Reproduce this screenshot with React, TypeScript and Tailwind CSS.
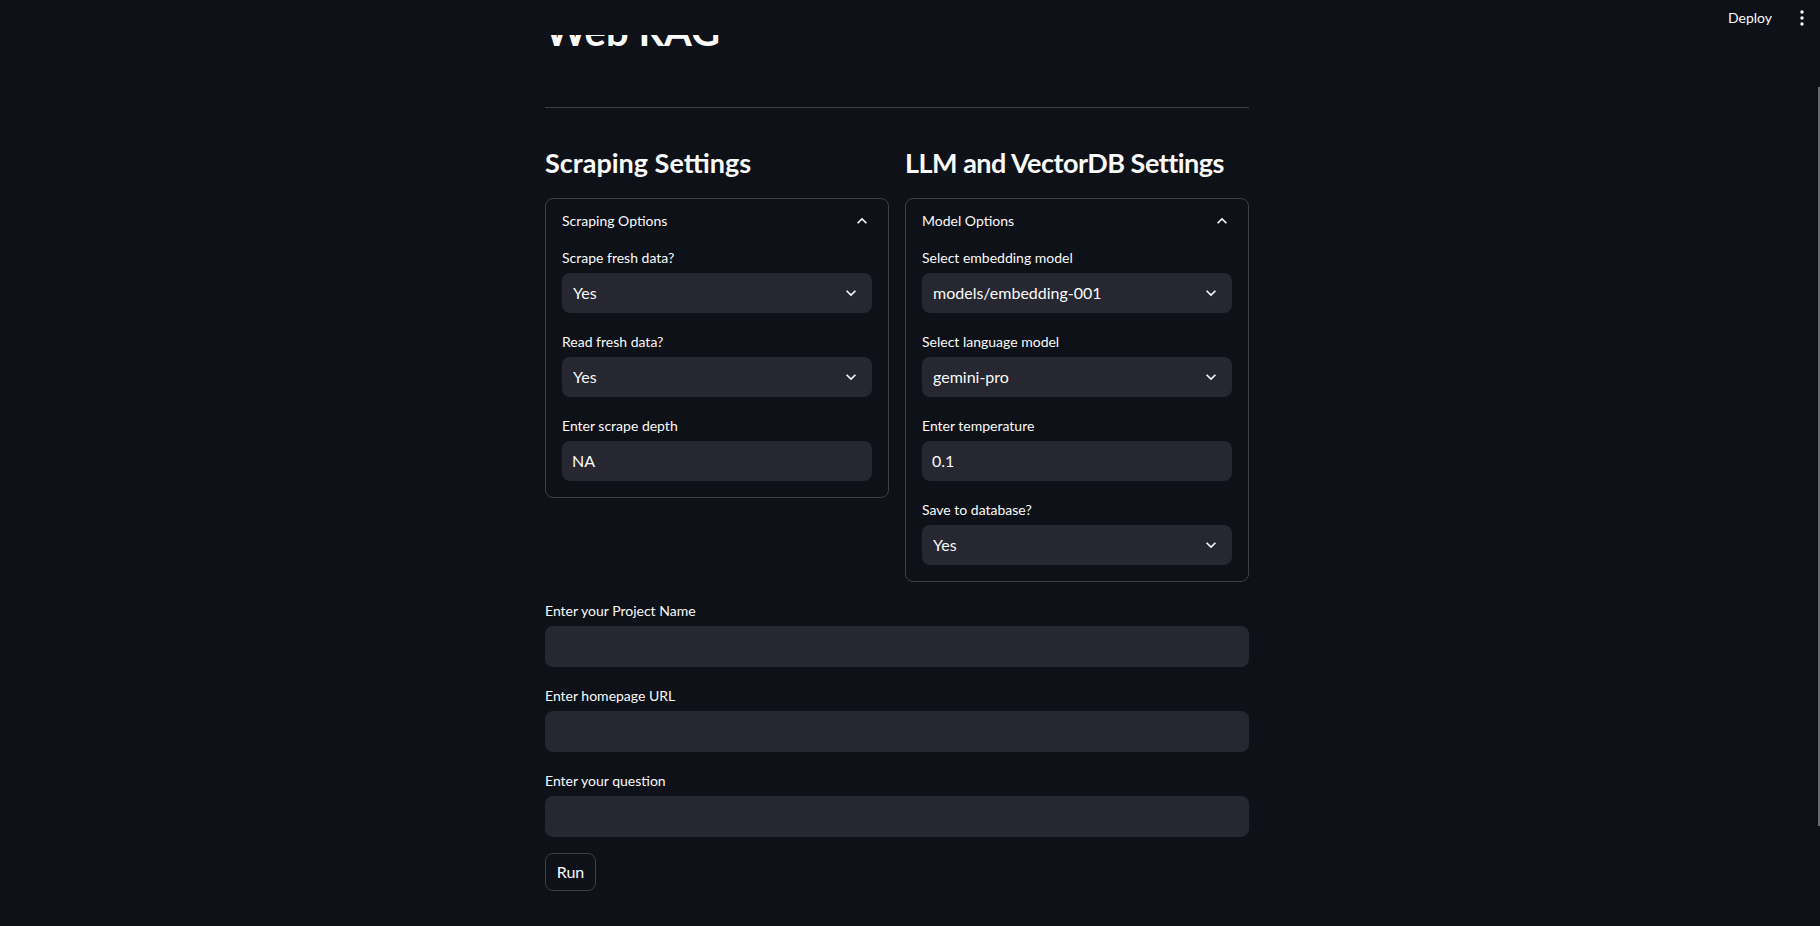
import React from 'react';

const font = { fontFamily: 'Lato, "Noto Sans", sans-serif' };

function ChevronDown() {
  return (
    <svg width="20" height="20" viewBox="0 0 24 24" fill="#fafafa">
      <path d="M16.59 8.59L12 13.17 7.41 8.59 6 10l6 6 6-6z" />
    </svg>
  );
}

function ChevronUp() {
  return (
    <svg width="20" height="20" viewBox="0 0 24 24" fill="#fafafa">
      <path d="M12 8l-6 6 1.41 1.41L12 10.83l4.59 4.58L18 14z" />
    </svg>
  );
}

function Label({ text }: { text: string }) {
  return <div className="h-[28px] text-[14px] leading-[25px] text-[#fafafa]">{text}</div>;
}

function SelectBox({ label, value }: { label: string; value: string }) {
  return (
    <div>
      <Label text={label} />
      <div className="h-[40px] rounded-lg bg-[#262730] flex items-center justify-between pl-[11px] pr-[11px]">
        <span className="text-[16px] text-[#fafafa]">{value}</span>
        <ChevronDown />
      </div>
    </div>
  );
}

function TextBox({ label, value, tall }: { label: string; value?: string; tall?: boolean }) {
  return (
    <div>
      <Label text={label} />
      <div className={`${tall ? 'h-[41px]' : 'h-[40px]'} rounded-lg bg-[#262730] flex items-center pl-[10px]`}>
        <span className="text-[16px] text-[#fafafa]">{value}</span>
      </div>
    </div>
  );
}

function Expander({ title, children }: { title: string; children: React.ReactNode }) {
  return (
    <div className="border border-[#3d4044] rounded-lg">
      <div className="h-[46px] flex items-center justify-between px-4 pb-[3px]">
        <span className="text-[14px] text-[#fafafa]">{title}</span>
        <ChevronUp />
      </div>
      <div className="px-4 pb-4 flex flex-col gap-4">{children}</div>
    </div>
  );
}

export default function App() {
  return (
    <div className="relative h-[926px] w-full overflow-hidden bg-[#0e1117] text-[#fafafa]" style={font}>
      {/* top bar */}
      <div className="absolute top-0 left-0 right-0 h-[35px] bg-[#0e1117] z-10 flex items-center justify-end">
        <span className="text-[14px] text-[#fafafa] mr-[18px]">Deploy</span>
        <svg width="24" height="24" viewBox="0 0 24 24" fill="#fafafa" className="mr-[6px]">
          <circle cx="12" cy="6" r="1.7" />
          <circle cx="12" cy="12" r="1.7" />
          <circle cx="12" cy="18" r="1.7" />
        </svg>
      </div>
      <div className="absolute right-0 top-[87px] h-[739px] w-[2px] bg-[#6a6b70]" />

      <div className="ml-[545px] w-[704px] pt-[7px]">
        <h1 className="text-[40px] leading-[48px] font-bold">Web RAG</h1>
        <div className="mt-[52px] h-px bg-[#3d4044]" />

        <div className="mt-[37px] grid grid-cols-2 gap-4 items-start">
          <div>
            <h3 className="text-[27px] leading-[36px] font-bold mb-[17px]">Scraping Settings</h3>
            <Expander title="Scraping Options">
              <SelectBox label="Scrape fresh data?" value="Yes" />
              <SelectBox label="Read fresh data?" value="Yes" />
              <TextBox label="Enter scrape depth" value="NA" />
            </Expander>
          </div>
          <div>
            <h3 className="text-[27px] leading-[36px] font-bold mb-[17px] tracking-[-0.5px]">LLM and VectorDB Settings</h3>
            <Expander title="Model Options">
              <SelectBox label="Select embedding model" value="models/embedding-001" />
              <SelectBox label="Select language model" value="gemini-pro" />
              <TextBox label="Enter temperature" value="0.1" />
              <SelectBox label="Save to database?" value="Yes" />
            </Expander>
          </div>
        </div>

        <div className="mt-4 flex flex-col gap-4">
          <TextBox label="Enter your Project Name" tall />
          <TextBox label="Enter homepage URL" tall />
          <TextBox label="Enter your question" tall />
          <div>
            <button className="h-[38px] w-[51px] rounded-lg border border-[#3d4044] bg-[#0e1117] text-[16px] text-[#fafafa]">
              Run
            </button>
          </div>
        </div>
      </div>
    </div>
  );
}
